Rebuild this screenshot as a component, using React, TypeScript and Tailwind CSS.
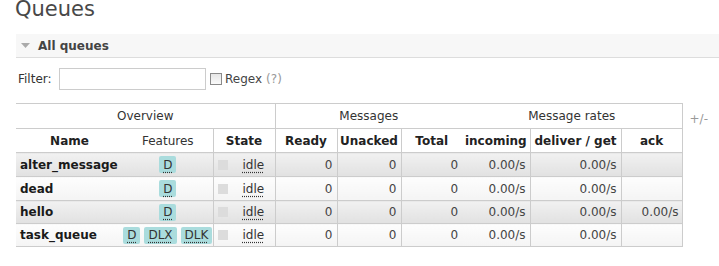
import React from "react";

type Row = {
  name: string;
  features: string[];
  ready: string;
  unacked: string;
  total: string;
  incoming: string;
  deliver: string;
  ack: string;
};

const rows: Row[] = [
  { name: "alter_message", features: ["D"], ready: "0", unacked: "0", total: "0", incoming: "0.00/s", deliver: "0.00/s", ack: "" },
  { name: "dead", features: ["D"], ready: "0", unacked: "0", total: "0", incoming: "0.00/s", deliver: "0.00/s", ack: "" },
  { name: "hello", features: ["D"], ready: "0", unacked: "0", total: "0", incoming: "0.00/s", deliver: "0.00/s", ack: "0.00/s" },
  { name: "task_queue", features: ["D", "DLX", "DLK"], ready: "0", unacked: "0", total: "0", incoming: "0.00/s", deliver: "0.00/s", ack: "" },
];

function Badge({ label }: { label: string }) {
  return (
    <span className="inline-flex h-[17px] items-center rounded-[2px] bg-[#aadcdd] px-[4px] text-[#333]">
      <span className="underline decoration-dotted underline-offset-[3px]">{label}</span>
    </span>
  );
}

export default function App() {
  return (
    <div className="h-[266px] w-[719px] overflow-hidden bg-white font-['DejaVu_Sans',sans-serif] text-[12px] text-[#484848]">
      <h1 className="ml-[15px] h-[34px] text-[21px] font-normal leading-[18px] text-[#484848]">Queues</h1>

      <div className="ml-[16px] flex h-[24px] items-center border-b border-[#ddd] bg-[#f7f7f7]">
        <svg className="ml-[5px]" width="9" height="5" viewBox="0 0 9 5">
          <polygon points="0,0 9,0 4.5,5" fill="#aaa" />
        </svg>
        <span className="ml-[8px] font-bold text-[#444]">All queues</span>
      </div>

      <div className="ml-[18px] mt-[10px] flex h-[22px] items-center">
        <span className="w-[41px] text-[#333]">Filter:</span>
        <div className="h-[22px] w-[147px] border border-[#ccc] bg-white" />
        <span className="ml-[4px] h-[12px] w-[12px] border border-[#8a8a8a] bg-linear-to-b from-[#e6e6e6] to-[#fafafa]" />
        <span className="ml-[3px] text-[#444]">Regex</span>
        <span className="ml-[4px] text-[#999]">(?)</span>
      </div>

      <div className="ml-[16px] mt-[13px] flex items-start">
        <table className="w-[666px] table-fixed border-collapse">
          <colgroup>
            <col className="w-[107px]" />
            <col className="w-[90px]" />
            <col className="w-[62px]" />
            <col className="w-[62px]" />
            <col className="w-[64px]" />
            <col className="w-[61px]" />
            <col className="w-[68px]" />
            <col className="w-[91px]" />
            <col className="w-[61px]" />
          </colgroup>
          <thead>
            <tr className="h-[25px]">
              <th colSpan={3} className="border-y border-r border-[#ccc] p-0 text-center font-normal text-[#333]">Overview</th>
              <th colSpan={3} className="border-y border-[#ccc] p-0 text-center font-normal text-[#333]">Messages</th>
              <th colSpan={3} className="border-y border-r border-[#ccc] p-0 text-center font-normal text-[#333]">Message rates</th>
            </tr>
            <tr className="h-[24px]">
              <th className="border-y border-[#ccc] p-0 text-center font-bold text-[#222]">Name</th>
              <th className="border-y border-r border-[#ccc] p-0 text-center font-normal text-[#333]">Features</th>
              <th className="border-y border-r border-[#ccc] p-0 text-center font-bold text-[#222]">State</th>
              <th className="border-y border-r border-[#ccc] p-0 text-center font-bold text-[#222]">Ready</th>
              <th className="border-y border-r border-[#ccc] p-0 text-center font-bold text-[#222]">Unacked</th>
              <th className="border-y border-[#ccc] p-0 text-center font-bold text-[#222]">Total</th>
              <th className="border-y border-r border-[#ccc] p-0 text-center font-bold text-[#222]">incoming</th>
              <th className="border-y border-r border-[#ccc] p-0 text-center font-bold text-[#222]">deliver / get</th>
              <th className="border-y border-r border-[#ccc] p-0 text-center font-bold text-[#222]">ack</th>
            </tr>
          </thead>
          <tbody>
            {rows.map((r, i) => {
              const bg = i % 2 === 0 ? "bg-linear-to-b from-[#f1f1f1] to-[#e1e1e1]" : "bg-linear-to-b from-[#fdfdfd] to-[#f4f4f4]";
              const h = i < 2 ? "h-[24px]" : "h-[23px]";
              return (
                <tr key={r.name} className={h}>
                  <td className={`${bg} border-y border-[#ccc] p-0 pl-[4px] font-bold text-[#1a1a1a]`}>{r.name}</td>
                  <td className={`${bg} border-y border-r border-[#ccc] p-0 text-center`}>
                    <div className="flex items-center justify-center gap-[4px]">
                      {r.features.map((f) => (
                        <Badge key={f} label={f} />
                      ))}
                    </div>
                  </td>
                  <td className={`${bg} border-y border-r border-[#ccc] p-0`}>
                    <div className="flex items-center pl-[4px]">
                      <span className="h-[10px] w-[10px] bg-[#dcdcdc]" />
                      <span className="ml-[15px] text-[#333] underline decoration-dotted underline-offset-[3px]">idle</span>
                    </div>
                  </td>
                  <td className={`${bg} border-y border-r border-[#ccc] p-0 pr-[4px] text-right text-[#444]`}>{r.ready}</td>
                  <td className={`${bg} border-y border-r border-[#ccc] p-0 pr-[4px] text-right text-[#444]`}>{r.unacked}</td>
                  <td className={`${bg} border-y border-[#ccc] p-0 pr-[4px] text-right text-[#444]`}>{r.total}</td>
                  <td className={`${bg} border-y border-r border-[#ccc] p-0 pr-[4px] text-right text-[#444]`}>{r.incoming}</td>
                  <td className={`${bg} border-y border-r border-[#ccc] p-0 pr-[4px] text-right text-[#444]`}>{r.deliver}</td>
                  <td className={`${bg} border-y border-r border-[#ccc] p-0 pr-[3px] text-right text-[#444]`}>{r.ack}</td>
                </tr>
              );
            })}
          </tbody>
        </table>
        <span className="ml-[7px] pt-[7px] text-[#999]">+/-</span>
      </div>
    </div>
  );
}
